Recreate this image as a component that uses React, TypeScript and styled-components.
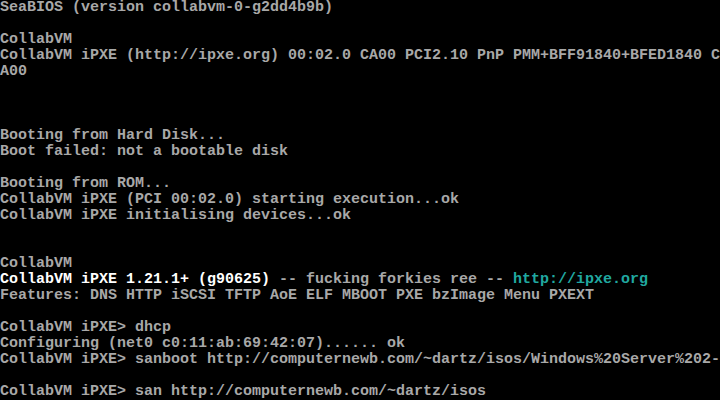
import React from "react";
import styled, { createGlobalStyle } from "styled-components";

const Global = createGlobalStyle`
  html, body { margin: 0; padding: 0; background: #000; }
  #root { width: 720px; height: 400px; }
`;

const Screen = styled.div`
  width: 720px;
  height: 400px;
  background: #000;
  display: flex;
  flex-direction: column;
  overflow: hidden;
`;

const Line = styled.div`
  height: 16px;
  line-height: 16px;
  white-space: pre;
  font-family: "Liberation Mono", "DejaVu Sans Mono", monospace;
  font-size: 15px;
  font-weight: bold;
  color: #a8a8a8;
  padding-left: 0;
`;

type Tone = "normal" | "bright" | "link";
const colors: Record<Tone, string> = {
  normal: "#a8a8a8",
  bright: "#ffffff",
  link: "#20a8a0",
};

const Seg = styled.span<{ $tone: Tone }>`
  color: ${(p) => colors[p.$tone]};
`;

type Part = [string, Tone];
const rows: Part[][] = [
  [["SeaBIOS (version collabvm-0-g2dd4b9b)", "normal"]],
  [],
  [["CollabVM", "normal"]],
  [["CollabVM iPXE (http://ipxe.org) 00:02.0 CA00 PCI2.10 PnP PMM+BFF91840+BFED1840 C", "normal"]],
  [["A00", "normal"]],
  [],
  [],
  [],
  [["Booting from Hard Disk...", "normal"]],
  [["Boot failed: not a bootable disk", "normal"]],
  [],
  [["Booting from ROM...", "normal"]],
  [["CollabVM iPXE (PCI 00:02.0) starting execution...ok", "normal"]],
  [["CollabVM iPXE initialising devices...ok", "normal"]],
  [],
  [],
  [["CollabVM", "normal"]],
  [
    ["CollabVM iPXE 1.21.1+ (g90625)", "bright"],
    [" -- fucking forkies ree -- ", "normal"],
    ["http://ipxe.org", "link"],
  ],
  [["Features: DNS HTTP iSCSI TFTP AoE ELF MBOOT PXE bzImage Menu PXEXT", "normal"]],
  [],
  [["CollabVM iPXE> dhcp", "normal"]],
  [["Configuring (net0 c0:11:ab:69:42:07)...... ok", "normal"]],
  [["CollabVM iPXE> sanboot http://computernewb.com/~dartz/isos/Windows%20Server%202-", "normal"]],
  [],
  [["CollabVM iPXE> san http://computernewb.com/~dartz/isos", "normal"]],
];

export default function App() {
  return (
    <>
      <Global />
      <Screen>
        {rows.map((parts, i) => (
          <Line key={i}>
            {parts.map(([t, tone], j) => (
              <Seg key={j} $tone={tone}>
                {t}
              </Seg>
            ))}
          </Line>
        ))}
      </Screen>
    </>
  );
}
